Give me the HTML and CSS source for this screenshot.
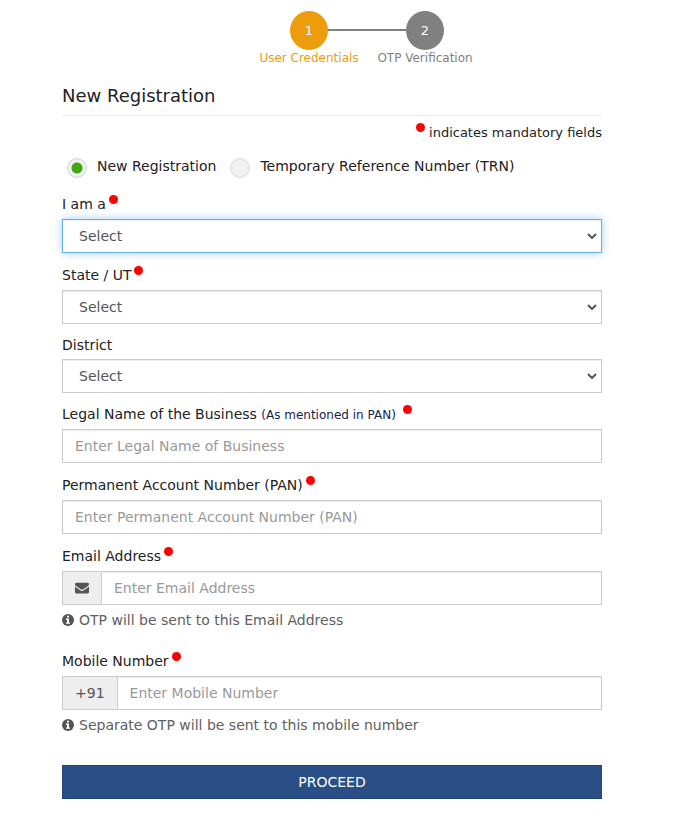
FILE: index.html
```html
<!DOCTYPE html>
<html lang="en">
<head>
<meta charset="utf-8">
<meta name="viewport" content="width=device-width, initial-scale=1">
<title>New Registration</title>
<link rel="stylesheet" href="styles.css">
</head>
<body>
<main class="page">
  <ol class="steps">
    <li class="step step-active"><span class="step-circle">1</span><span class="step-name">User Credentials</span></li>
    <li class="step"><span class="step-circle">2</span><span class="step-name">OTP Verification</span></li>
  </ol>

  <h1 class="title">New Registration</h1>
  <p class="mandatory"><i class="dot"></i> indicates mandatory fields</p>

  <form class="form">
    <div class="choices">
      <input class="radio" type="radio" name="kind" id="kind-new" checked>
      <label class="choice-label" for="kind-new">New Registration</label>
      <input class="radio" type="radio" name="kind" id="kind-trn">
      <label class="choice-label" for="kind-trn">Temporary Reference Number (TRN)</label>
    </div>

    <div class="group">
      <label class="label required" for="role">I am a<i class="dot"></i></label>
      <div class="select-wrap">
        <select class="control select focused" id="role"><option>Select</option></select>
        <svg class="chevron" viewBox="0 0 10 6" aria-hidden="true"><path d="M1 1l4 4 4-4"/></svg>
      </div>
    </div>

    <div class="group">
      <label class="label required" for="state">State / UT<i class="dot"></i></label>
      <div class="select-wrap">
        <select class="control select" id="state"><option>Select</option></select>
        <svg class="chevron" viewBox="0 0 10 6" aria-hidden="true"><path d="M1 1l4 4 4-4"/></svg>
      </div>
    </div>

    <div class="group">
      <label class="label" for="district">District</label>
      <div class="select-wrap">
        <select class="control select" id="district"><option>Select</option></select>
        <svg class="chevron" viewBox="0 0 10 6" aria-hidden="true"><path d="M1 1l4 4 4-4"/></svg>
      </div>
    </div>

    <div class="group">
      <label class="label with-note" for="business">Legal Name of the Business <span class="note">(As mentioned in PAN)</span> <i class="dot"></i></label>
      <input class="control" type="text" id="business" placeholder="Enter Legal Name of Business">
    </div>

    <div class="group">
      <label class="label required" for="pan">Permanent Account Number (PAN)<i class="dot"></i></label>
      <input class="control" type="text" id="pan" placeholder="Enter Permanent Account Number (PAN)">
    </div>

    <div class="group group-help">
      <label class="label required" for="email">Email Address<i class="dot"></i></label>
      <div class="input-group">
        <span class="addon"><svg class="mail" viewBox="0 0 14 12" aria-hidden="true"><path d="M0 2.200C0 1.300.6.700 1.400.700h11.200c.8 0 1.400.6 1.400 1.400 0 .9-.7 1.700-1.400 2.200L8.300 7.300C7.900 7.600 7.500 7.800 7 7.800s-.9-.2-1.300-.5L1.400 4.300C.8 3.900 0 3 0 2.200zM14 4.600v5.700c0 .7-.6 1.200-1.300 1.200H1.300C.6 11.500 0 11 0 10.300V4.600c.3.300.6.500.9.700l4.200 3c.6.400 1.200.7 1.900.7s1.300-.3 1.900-.7l4.200-3c.3-.2.600-.4.900-.7z"/></svg></span>
        <input class="control" type="email" id="email" placeholder="Enter Email Address">
      </div>
      <p class="help"><svg class="info" viewBox="0 0 12 12" aria-hidden="true"><circle cx="6" cy="6" r="6"/><path d="M5 1.800h2v1.700H5zM4 4.600h3v3.800h1v1.400H4V8.400h1V6H4z"/></svg>OTP will be sent to this Email Address</p>
    </div>

    <div class="group group-help">
      <label class="label required" for="mobile">Mobile Number<i class="dot"></i></label>
      <div class="input-group">
        <span class="addon">+91</span>
        <input class="control" type="tel" id="mobile" placeholder="Enter Mobile Number">
      </div>
      <p class="help"><svg class="info" viewBox="0 0 12 12" aria-hidden="true"><circle cx="6" cy="6" r="6"/><path d="M5 1.800h2v1.700H5zM4 4.600h3v3.800h1v1.400H4V8.400h1V6H4z"/></svg>Separate OTP will be sent to this mobile number</p>
    </div>

    <button class="proceed" type="button">PROCEED</button>
  </form>
</main>
</body>
</html>
```
FILE: styles.css
```css
* { box-sizing: border-box; }

body {
  margin: 0;
  background: #fff;
  color: #222;
  font: 14px/20px Verdana, "DejaVu Sans", sans-serif;
}

.page { padding: 11px 73px 39px 62px; }

.steps {
  display: flex;
  justify-content: center;
  margin: 0 0 20px;
  padding: 0 0 0 70px;
  list-style: none;
}

.step {
  position: relative;
  display: flex;
  flex-direction: column;
  align-items: center;
  width: 116px;
  color: #808080;
  font-size: 12px;
  line-height: 16px;
  white-space: nowrap;
}

.step + .step::before {
  content: "";
  position: absolute;
  top: 18px;
  right: 50%;
  width: 100%;
  height: 2px;
  background: #808080;
}

.step-circle {
  position: relative;
  z-index: 1;
  width: 38px;
  height: 39px;
  border-radius: 50%;
  background: #808080;
  color: #fff;
  font-size: 13px;
  line-height: 39px;
  text-align: center;
}

.step-active { color: #ed9c0c; }
.step-active .step-circle { background: #ed9c0c; }

.title {
  margin: 0;
  padding-bottom: 9px;
  border-bottom: 1px solid #eee;
  font-size: 18px;
  font-weight: 400;
  line-height: 20px;
}

.mandatory {
  margin: 7px 0 0;
  font-size: 13px;
  text-align: right;
}

.dot {
  display: inline-block;
  width: 9px;
  height: 9px;
  margin-left: 3px;
  border-radius: 50%;
  background: #f00;
  vertical-align: 5px;
  line-height: 0;
}

.choices {
  display: flex;
  align-items: center;
  height: 20px;
  margin: 15px 0 16px 5px;
}

.radio {
  appearance: none;
  flex: none;
  width: 20px;
  height: 20px;
  margin: 0 10px 0 0;
  border: 1px solid #ddd;
  border-radius: 50%;
  background: #f0f0f0;
}

.radio:checked {
  border-color: #c9d6c5;
  background: radial-gradient(circle, #41a80e 5px, #f0f0f0 6px);
}

.choice-label { margin-right: 14px; padding-bottom: 4px; }

.group { margin-bottom: 12px; }
.group-help { margin-bottom: 21px; }

.label { display: block; height: 18px; margin-bottom: 5px; line-height: 18px; }
.with-note { height: 19px; }
.required { height: 20px; line-height: 20px; }
.note { color: #14244e; font-size: 12px; }

.control {
  display: block;
  width: 100%;
  height: 34px;
  padding: 0 12px;
  border: 1px solid #ccc;
  border-radius: 0;
  outline: 0;
  background: #fff;
  box-shadow: inset 0 1px 1px rgba(0, 0, 0, .075);
  color: #555;
  font: inherit;
}

.control::placeholder { color: #999; opacity: 1; }

.select { appearance: none; padding: 0 30px 0 16px; }
.select-wrap { position: relative; }

.focused {
  border-color: #66afe9;
  box-shadow: inset 0 1px 1px rgba(0, 0, 0, .075), 0 0 8px rgba(102, 175, 233, .6);
}

.chevron {
  position: absolute;
  top: 14px;
  right: 5px;
  width: 10px;
  height: 6px;
  fill: none;
  stroke: #555;
  stroke-width: 2;
  pointer-events: none;
}

.input-group { display: flex; }

.addon {
  display: flex;
  align-items: center;
  padding: 0 12px;
  border: 1px solid #ccc;
  border-right: 0;
  background: #eee;
  color: #555;
}

.input-group .control { flex: 1; min-width: 0; }

.mail { width: 14px; height: 12px; fill: #555; }

.help {
  display: flex;
  align-items: center;
  gap: 5px;
  margin: 5px 0 0;
  color: #606060;
}

.info { flex: none; width: 12px; height: 12px; fill: #555; }
.info path { fill: #fff; }

.proceed {
  display: block;
  width: 100%;
  height: 34px;
  margin-top: 30px;
  border: 1px solid #23457a;
  background: #2a4f87;
  color: #fff;
  font: inherit;
}
```
